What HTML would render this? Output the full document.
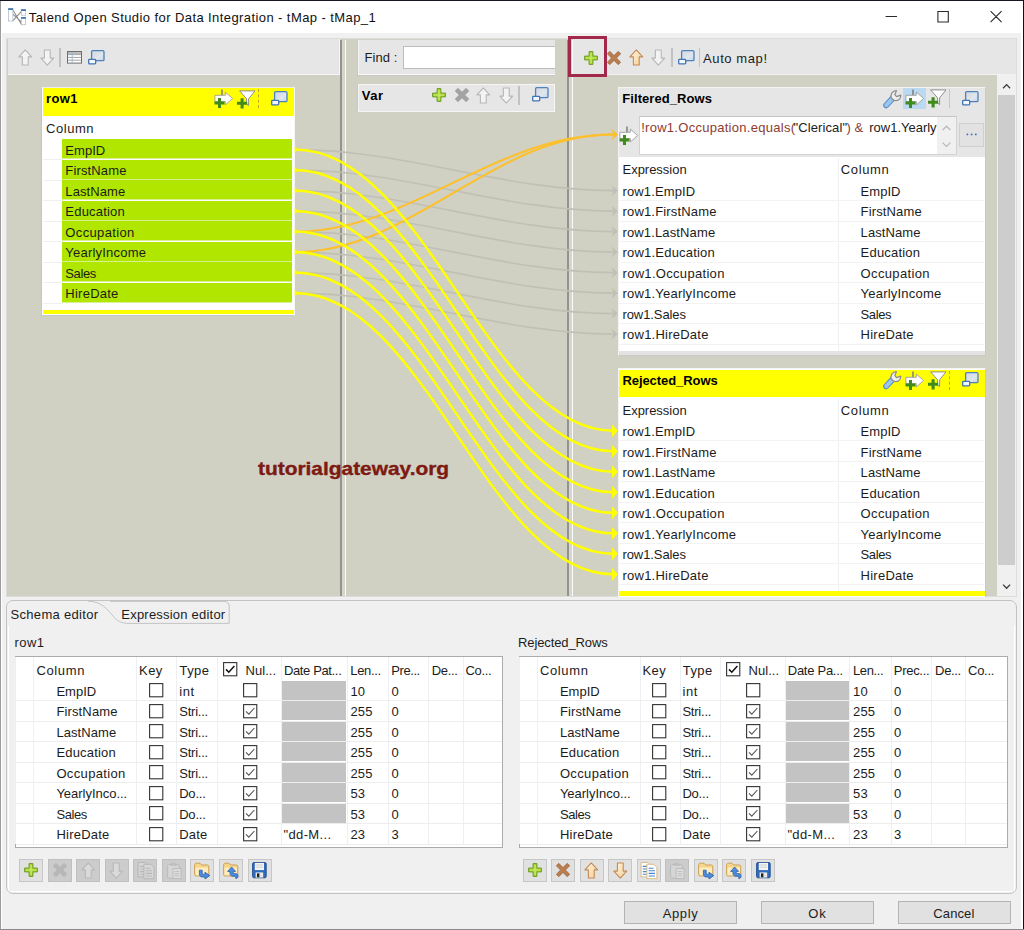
<!DOCTYPE html>
<html lang="en"><head><meta charset="utf-8"><title>Talend Open Studio for Data Integration - tMap - tMap_1</title><style>html,body{margin:0;padding:0}body{width:1024px;height:930px;overflow:hidden;background:#f0f0f0;position:relative;font-family:'Liberation Sans',sans-serif;font-size:13px}.a{position:absolute;display:block;overflow:visible}.t{position:absolute;white-space:pre;line-height:1;font-family:'Liberation Sans',sans-serif}</style></head><body><svg width="0" height="0" style="position:absolute"><defs><linearGradient id="gArr" x1="0" y1="0" x2="1" y2="1"><stop offset="0" stop-color="#fff6e2"/><stop offset="1" stop-color="#f6cf96"/></linearGradient><linearGradient id="gWin" x1="0" y1="0" x2="1" y2="1"><stop offset="0" stop-color="#d4d8de"/><stop offset=".6" stop-color="#dfe6ee"/><stop offset="1" stop-color="#c9d6e6"/></linearGradient></defs></svg>
<div class="a " style="left:1px;top:1px;width:1022px;height:32px;background:#fff;"></div>
<div class="a " style="left:1021px;top:33px;width:2px;height:896px;background:#fff;"></div>
<div class="a " style="left:1px;top:33px;width:1.4px;height:896px;background:#fff;"></div>
<svg class="a" style="left:7.8px;top:7.8px;" width="18.4" height="17.6" viewBox="0 0 18.4 17.6"><path d="M5 2.2L13.4 16.2M4.8 6.2L13.4 13.8M5 12.6L13.4 3.4" stroke="#8e8e8e" stroke-width="1.1"/><rect x="0.5" y="0.6" width="4.4" height="12.4" fill="#fff" stroke="#a8b6c8" stroke-width=".7"/><rect x="0.3" y="0.3" width="4.8" height="1.7" fill="#3c72ae"/><rect x="13.3" y="1.6" width="4.4" height="5.6" fill="#fff" stroke="#a8b6c8" stroke-width=".7"/><rect x="13.1" y="1.3" width="4.8" height="1.7" fill="#3c72ae"/><rect x="13.3" y="9.4" width="4.4" height="7.4" fill="#fff" stroke="#a8b6c8" stroke-width=".7"/><rect x="13.1" y="9.1" width="4.8" height="1.7" fill="#3c72ae"/></svg>
<span class="t" style="left:28.80px;top:11.30px;font-size:13px;letter-spacing:0.415px;color:#111;">Talend Open Studio for Data Integration - tMap - tMap_1</span>
<svg class="a" style="left:880px;top:6px;" width="130" height="22" viewBox="0 0 130 22"><path d="M5.6 10.5H17M57.9 5.5H68.3V16H57.9ZM110.6 5.2L121.6 16.2M121.6 5.2L110.6 16.2" fill="none" stroke="#2a2a2a" stroke-width="1.1"/></svg>
<div class="a " style="left:6px;top:38px;width:1011.4px;height:559.4px;background:#d1d1c3;border:1.6px solid #dcdcdc;box-sizing:border-box;"></div>
<div class="a " style="left:7.6px;top:39px;width:332.4px;height:35.8px;background:#e6e6e6;border-bottom:1.4px solid #f6f6f6;border-right:1px solid #f6f6f6;box-sizing:border-box;"></div>
<svg class="a" style="left:17.5px;top:48.6px;" width="14.6" height="17" viewBox="0 0 16 18.5"><path d="M8 1 L15 8.6 L11.2 8.6 L11.2 17.4 L4.8 17.4 L4.8 8.6 L1 8.6 Z" fill="#f3f3f3" stroke="#b6b6b6" stroke-width="1.2" stroke-linejoin="round"/></svg>
<svg class="a" style="left:39.8px;top:48.9px;" width="14.6" height="17" viewBox="0 0 16 18.5"><path d="M8 17.5 L15 9.9 L11.2 9.9 L11.2 1.1 L4.8 1.1 L4.8 9.9 L1 9.9 Z" fill="#f3f3f3" stroke="#b6b6b6" stroke-width="1.2" stroke-linejoin="round"/></svg>
<div class="a " style="left:59.2px;top:48px;width:1.5px;height:19px;background:#c2c2c2;"></div>
<svg class="a" style="left:67.2px;top:50.7px;" width="15" height="12.6" viewBox="0 0 15 12.6"><rect x=".5" y=".5" width="14" height="11.6" fill="#fff" stroke="#6e6e6e" stroke-width="1"/><rect x="1" y="1" width="13" height="2.2" fill="#bcbcbc"/><path d="M1 3.6H14M1 6.4H14M1 9.2H14" stroke="#9a9a9a" stroke-width=".9"/><path d="M5.2 1V12" stroke="#9ab4d6" stroke-width=".9"/></svg>
<svg class="a" style="left:88px;top:49.6px;" width="17" height="15" viewBox="0 0 17 15"><rect x="3.6" y=".7" width="12.4" height="10" rx="1.2" fill="url(#gWin)" stroke="#4f81bd" stroke-width="1.3"/><rect x=".7" y="9.3" width="7" height="4.6" rx=".8" fill="#f4f8fc" stroke="#3f74b5" stroke-width="1.3"/></svg>
<div class="a " style="left:340.2px;top:40px;width:1.5px;height:556px;background:#939393;"></div><div class="a " style="left:341.6px;top:40px;width:3.4px;height:556px;background:#d6d6ca;"></div><div class="a " style="left:345px;top:40px;width:1.2px;height:556px;background:#fbfbfb;"></div>
<div class="a " style="left:567.2px;top:40px;width:1.5px;height:556px;background:#939393;"></div><div class="a " style="left:568.6px;top:40px;width:3.4px;height:556px;background:#d6d6ca;"></div><div class="a " style="left:572px;top:40px;width:1.2px;height:556px;background:#fbfbfb;"></div>
<div class="a " style="left:357px;top:40.2px;width:1px;height:35.4px;background:#c8c8c2;"></div>
<div class="a " style="left:357.2px;top:75px;width:197.8px;height:0.8px;background:#c8c8c2;"></div>
<div class="a " style="left:357.8px;top:40.2px;width:197.2px;height:34.8px;background:#e6e6e6;border-left:1.2px solid #f8f8f8;border-bottom:1.4px solid #f8f8f8;box-sizing:border-box;"></div>
<span class="t" style="left:364.40px;top:51.10px;font-size:13px;letter-spacing:0.081px;color:#1c1c1c;">Find :</span>
<div class="a " style="left:403px;top:46.4px;width:151.6px;height:22.4px;background:#fff;border:1px solid #bcbcbc;border-right:none;box-sizing:border-box;"></div>
<div class="a " style="left:357px;top:83.6px;width:1px;height:29.2px;background:#c8c8c2;"></div>
<div class="a " style="left:357.8px;top:83.6px;width:197.2px;height:28.8px;background:#e6e6e6;border:1.2px solid #f6f6f6;box-sizing:border-box;"></div>
<span class="t" style="left:361.70px;top:89.20px;font-size:13px;letter-spacing:0.550px;color:#000;font-weight:700;">Var</span>
<svg class="a" style="left:432.4px;top:88.4px;" width="14" height="14" viewBox="0 0 14 14"><path d="M5.1 .6 H8.9 V5.1 H13.4 V8.9 H8.9 V13.4 H5.1 V8.9 H.6 V5.1 H5.1 Z" fill="#aad636" stroke="#6b9c22" stroke-width="1" stroke-linejoin="round"/><path d="M6.4 2 H7.6 V6.4 H12 V7.6 H7.6 V12 H6.4 V7.6 H2 V6.4 H6.4 Z" fill="#d6f07c" opacity=".8"/></svg>
<svg class="a" style="left:455.1px;top:88.2px;" width="14" height="14" viewBox="0 0 14 14"><g transform="rotate(45 7 7)"><path d="M5 -.7H9V5H14.7V9H9V14.7H5V9H-.7V5H5Z" fill="#a3a3a3" stroke="#a3a3a3" stroke-width=".7" stroke-linejoin="round"/></g></svg>
<svg class="a" style="left:476.1px;top:87px;" width="14.6" height="17" viewBox="0 0 16 18.5"><path d="M8 1 L15 8.6 L11.2 8.6 L11.2 17.4 L4.8 17.4 L4.8 8.6 L1 8.6 Z" fill="#f3f3f3" stroke="#b6b6b6" stroke-width="1.2" stroke-linejoin="round"/></svg>
<svg class="a" style="left:498.5px;top:87.2px;" width="14.6" height="17" viewBox="0 0 16 18.5"><path d="M8 17.5 L15 9.9 L11.2 9.9 L11.2 1.1 L4.8 1.1 L4.8 9.9 L1 9.9 Z" fill="#f3f3f3" stroke="#b6b6b6" stroke-width="1.2" stroke-linejoin="round"/></svg>
<div class="a " style="left:518.4px;top:85.6px;width:1.5px;height:19px;background:#c2c2c2;"></div>
<svg class="a" style="left:531.8px;top:87.2px;" width="17" height="15" viewBox="0 0 17 15"><rect x="3.6" y=".7" width="12.4" height="10" rx="1.2" fill="url(#gWin)" stroke="#4f81bd" stroke-width="1.3"/><rect x=".7" y="9.3" width="7" height="4.6" rx=".8" fill="#f4f8fc" stroke="#3f74b5" stroke-width="1.3"/></svg>
<div class="a " style="left:573.2px;top:39px;width:443px;height:36px;background:#e6e6e6;border-bottom:1px solid #f2f2f2;box-sizing:border-box;"></div>
<svg class="a" style="left:583.6px;top:50.6px;" width="14" height="14" viewBox="0 0 14 14"><path d="M5.1 .6 H8.9 V5.1 H13.4 V8.9 H8.9 V13.4 H5.1 V8.9 H.6 V5.1 H5.1 Z" fill="#aad636" stroke="#6b9c22" stroke-width="1" stroke-linejoin="round"/><path d="M6.4 2 H7.6 V6.4 H12 V7.6 H7.6 V12 H6.4 V7.6 H2 V6.4 H6.4 Z" fill="#d6f07c" opacity=".8"/></svg>
<svg class="a" style="left:607.4px;top:51px;" width="14" height="14" viewBox="0 0 14 14"><g transform="rotate(45 7 7)"><path d="M5.3 -.7H8.7V5.3H14.7V8.7H8.7V14.7H5.3V8.7H-.7V5.3H5.3Z" fill="#b97d4e" stroke="#99603a" stroke-width=".7" stroke-linejoin="round"/></g></svg>
<svg class="a" style="left:628.7px;top:48.8px;" width="14.6" height="17" viewBox="0 0 16 18.5"><path d="M8 1 L15 8.6 L11.2 8.6 L11.2 17.4 L4.8 17.4 L4.8 8.6 L1 8.6 Z" fill="url(#gArr)" stroke="#c48a54" stroke-width="1.2" stroke-linejoin="round"/></svg>
<svg class="a" style="left:651.3px;top:49px;" width="14.6" height="17" viewBox="0 0 16 18.5"><path d="M8 17.5 L15 9.9 L11.2 9.9 L11.2 1.1 L4.8 1.1 L4.8 9.9 L1 9.9 Z" fill="#f3f3f3" stroke="#b6b6b6" stroke-width="1.2" stroke-linejoin="round"/></svg>
<div class="a " style="left:671px;top:48px;width:1.5px;height:19px;background:#c2c2c2;"></div>
<svg class="a" style="left:678.1px;top:49.8px;" width="17" height="15" viewBox="0 0 17 15"><rect x="3.6" y=".7" width="12.4" height="10" rx="1.2" fill="url(#gWin)" stroke="#4f81bd" stroke-width="1.3"/><rect x=".7" y="9.3" width="7" height="4.6" rx=".8" fill="#f4f8fc" stroke="#3f74b5" stroke-width="1.3"/></svg>
<div class="a " style="left:698.6px;top:48px;width:1.5px;height:19px;background:#c2c2c2;"></div>
<span class="t" style="left:703.10px;top:52.10px;font-size:13px;letter-spacing:0.582px;color:#1c1c1c;">Auto map!</span>
<div class="a " style="left:568px;top:36px;width:39px;height:41px;border:3.2px solid #a3294b;box-sizing:border-box;"></div>
<div class="a " style="left:996.6px;top:75px;width:19.6px;height:521px;background:#f0f0f0;"></div>
<div class="a " style="left:998px;top:94.8px;width:17px;height:470.4px;background:#cdcdcd;"></div>
<svg class="a" style="left:1000px;top:80px;" width="14" height="10" viewBox="0 0 14 10"><path d="M3.1 8.2L6.6 4.6L10.1 8.2" fill="none" stroke="#3a3a3a" stroke-width="1.3"/></svg>
<svg class="a" style="left:1000px;top:580px;" width="14" height="10" viewBox="0 0 14 10"><path d="M3.1 4.6L6.6 8.2L10.1 4.6" fill="none" stroke="#3a3a3a" stroke-width="1.3"/></svg>
<div class="a " style="left:41.4px;top:86.8px;width:253.4px;height:228.8px;background:#fff;border:1px solid #c6c6c1;border-top-color:#efefea;border-right-color:#f6f6f2;border-bottom-color:#c2c8cf;box-sizing:border-box;"></div>
<div class="a " style="left:42.8px;top:87.8px;width:250.8px;height:28.2px;background:#ffff00;"></div>
<span class="t" style="left:46.00px;top:92.40px;font-size:13px;letter-spacing:0.364px;color:#000;font-weight:700;">row1</span>
<svg class="a" style="left:214px;top:89.4px;" width="19.4" height="19.4" viewBox="0 0 19.4 19.4"><path d="M8 .6V6.4" stroke="#7c7c7c" stroke-width="1.5"/><path d="M.9 6.3H11.3V3.1L18.6 9.5L11.3 16V12.6H.9Z" fill="#fff" stroke="#9c9c9c" stroke-width=".9" stroke-linejoin="round"/><path transform="translate(0.5 8.9)" d="M3.5 0H6.5V3.5H10V6.5H6.5V10H3.5V6.5H0V3.5H3.5Z" fill="#3f8c1c"/></svg>
<svg class="a" style="left:236.6px;top:89.6px;" width="18.8" height="18.6" viewBox="0 0 18.8 18.6"><path d="M2.6 .9H18L11.6 8.8V15.6L9.6 14V8.8Z" fill="#fff" stroke="#8e8e8e" stroke-width="1" stroke-linejoin="round"/><path transform="translate(0 8.2)" d="M3.57 0H6.63V3.57H10.2V6.63H6.63V10.2H3.57V6.63H0V3.57H3.57Z" fill="#3f8c1c"/></svg>
<div class="a " style="left:258px;top:89px;width:1px;height:19px;border-left:1px dashed #d0a020;"></div>
<svg class="a" style="left:271px;top:90.8px;" width="17" height="15" viewBox="0 0 17 15"><rect x="3.6" y=".7" width="12.4" height="10" rx="1.2" fill="url(#gWin)" stroke="#4f81bd" stroke-width="1.3"/><rect x=".7" y="9.3" width="7" height="4.6" rx=".8" fill="#f4f8fc" stroke="#3f74b5" stroke-width="1.3"/></svg>
<span class="t" style="left:46.00px;top:122.20px;font-size:13px;letter-spacing:0.551px;color:#1c1c1c;">Column</span>
<div class="a " style="left:42.6px;top:159.2px;width:20px;height:1px;background:#efefef;"></div>
<div class="a " style="left:62.1px;top:139px;width:230.4px;height:19.2px;background:#b1e600;"></div>
<div class="a " style="left:62.1px;top:158.2px;width:230.4px;height:1.3px;background:#d9f08f;"></div>
<span class="t" style="left:65.35px;top:143.80px;font-size:13px;letter-spacing:0.033px;color:#1c1c1c;">EmpID</span>
<div class="a " style="left:42.6px;top:179.7px;width:20px;height:1px;background:#efefef;"></div>
<div class="a " style="left:62.1px;top:159.5px;width:230.4px;height:19.2px;background:#b1e600;"></div>
<div class="a " style="left:62.1px;top:178.7px;width:230.4px;height:1.3px;background:#d9f08f;"></div>
<span class="t" style="left:65.35px;top:164.30px;font-size:13px;letter-spacing:0.139px;color:#1c1c1c;">FirstName</span>
<div class="a " style="left:42.6px;top:200.2px;width:20px;height:1px;background:#efefef;"></div>
<div class="a " style="left:62.1px;top:180px;width:230.4px;height:19.2px;background:#b1e600;"></div>
<div class="a " style="left:62.1px;top:199.2px;width:230.4px;height:1.3px;background:#d9f08f;"></div>
<span class="t" style="left:65.35px;top:184.80px;font-size:13px;letter-spacing:0.077px;color:#1c1c1c;">LastName</span>
<div class="a " style="left:42.6px;top:220.7px;width:20px;height:1px;background:#efefef;"></div>
<div class="a " style="left:62.1px;top:200.5px;width:230.4px;height:19.2px;background:#b1e600;"></div>
<div class="a " style="left:62.1px;top:219.7px;width:230.4px;height:1.3px;background:#d9f08f;"></div>
<span class="t" style="left:65.35px;top:205.30px;font-size:13px;letter-spacing:0.194px;color:#1c1c1c;">Education</span>
<div class="a " style="left:42.6px;top:241.2px;width:20px;height:1px;background:#efefef;"></div>
<div class="a " style="left:62.1px;top:221px;width:230.4px;height:19.2px;background:#b1e600;"></div>
<div class="a " style="left:62.1px;top:240.2px;width:230.4px;height:1.3px;background:#d9f08f;"></div>
<span class="t" style="left:65.35px;top:225.80px;font-size:13px;letter-spacing:0.351px;color:#1c1c1c;">Occupation</span>
<div class="a " style="left:42.6px;top:261.7px;width:20px;height:1px;background:#efefef;"></div>
<div class="a " style="left:62.1px;top:241.5px;width:230.4px;height:19.2px;background:#b1e600;"></div>
<div class="a " style="left:62.1px;top:260.7px;width:230.4px;height:1.3px;background:#d9f08f;"></div>
<span class="t" style="left:65.35px;top:246.30px;font-size:13px;letter-spacing:0.212px;color:#1c1c1c;">YearlyIncome</span>
<div class="a " style="left:42.6px;top:282.2px;width:20px;height:1px;background:#efefef;"></div>
<div class="a " style="left:62.1px;top:262px;width:230.4px;height:19.2px;background:#b1e600;"></div>
<div class="a " style="left:62.1px;top:281.2px;width:230.4px;height:1.3px;background:#d9f08f;"></div>
<span class="t" style="left:65.35px;top:266.80px;font-size:13px;letter-spacing:-0.417px;color:#1c1c1c;">Sales</span>
<div class="a " style="left:42.6px;top:302.7px;width:20px;height:1px;background:#efefef;"></div>
<div class="a " style="left:62.1px;top:282.5px;width:230.4px;height:19.2px;background:#b1e600;"></div>
<div class="a " style="left:62.1px;top:301.7px;width:230.4px;height:1.3px;background:#d9f08f;"></div>
<span class="t" style="left:65.35px;top:287.30px;font-size:13px;letter-spacing:0.238px;color:#1c1c1c;">HireDate</span>
<div class="a " style="left:42.8px;top:310px;width:250.8px;height:4.4px;background:#ffff00;"></div>
<div class="a " style="left:618px;top:86.8px;width:367.6px;height:269.4px;background:#fff;border:1px solid #f4f4f4;border-right-color:#c9c9c4;border-bottom-color:#c9c9c4;box-sizing:border-box;"></div>
<div class="a " style="left:619px;top:87.8px;width:365.6px;height:68.8px;background:#e6e6e6;"></div>
<span class="t" style="left:622.30px;top:92.40px;font-size:13px;letter-spacing:0.065px;color:#000;font-weight:700;">Filtered_Rows</span>
<svg class="a" style="left:883px;top:89.6px;" width="18.6" height="18" viewBox="0 0 18.6 18"><path d="M3.2 15.2 L9.6 8.4" stroke="#5a8fca" stroke-width="6" stroke-linecap="round"/><path d="M3.3 15.1 L9.5 8.5" stroke="#9bc6ee" stroke-width="4" stroke-linecap="round"/><path d="M8.6 8.2 C6.8 4.6 9.4 .6 13.4 .7 L11.8 4.6 L13.6 6.6 L17.8 5.2 C18 9.2 14.2 11.6 10.6 10.2 Z" fill="#f1f1f1" stroke="#8c8c8c" stroke-width="1.25" stroke-linejoin="round"/></svg>
<div class="a " style="left:903.4px;top:88px;width:22.6px;height:20.6px;background:#bcd9f2;"></div>
<svg class="a" style="left:905.2px;top:88.8px;" width="19.4" height="19.4" viewBox="0 0 19.4 19.4"><path d="M8 .6V6.4" stroke="#7c7c7c" stroke-width="1.5"/><path d="M.9 6.3H11.3V3.1L18.6 9.5L11.3 16V12.6H.9Z" fill="#fff" stroke="#9c9c9c" stroke-width=".9" stroke-linejoin="round"/><path transform="translate(0.5 8.9)" d="M3.5 0H6.5V3.5H10V6.5H6.5V10H3.5V6.5H0V3.5H3.5Z" fill="#3f8c1c"/></svg>
<svg class="a" style="left:927.6px;top:89px;" width="18.8" height="18.6" viewBox="0 0 18.8 18.6"><path d="M2.6 .9H18L11.6 8.8V15.6L9.6 14V8.8Z" fill="#fff" stroke="#8e8e8e" stroke-width="1" stroke-linejoin="round"/><path transform="translate(0 8.2)" d="M3.57 0H6.63V3.57H10.2V6.63H6.63V10.2H3.57V6.63H0V3.57H3.57Z" fill="#3f8c1c"/></svg>
<div class="a " style="left:949px;top:89px;width:1.4px;height:19px;background:#c6c6c6;"></div>
<svg class="a" style="left:962px;top:90.8px;" width="17" height="15" viewBox="0 0 17 15"><rect x="3.6" y=".7" width="12.4" height="10" rx="1.2" fill="url(#gWin)" stroke="#4f81bd" stroke-width="1.3"/><rect x=".7" y="9.3" width="7" height="4.6" rx=".8" fill="#f4f8fc" stroke="#3f74b5" stroke-width="1.3"/></svg>
<svg class="a" style="left:619.1px;top:125.9px;" width="19.4" height="19.4" viewBox="0 0 19.4 19.4"><path d="M8 .6V6.4" stroke="#7c7c7c" stroke-width="1.5"/><path d="M.9 6.3H11.3V3.1L18.6 9.5L11.3 16V12.6H.9Z" fill="#fff" stroke="#9c9c9c" stroke-width=".9" stroke-linejoin="round"/><path transform="translate(0.5 8.9)" d="M3.5 0H6.5V3.5H10V6.5H6.5V10H3.5V6.5H0V3.5H3.5Z" fill="#3f8c1c"/></svg>
<div class="a " style="left:639.2px;top:116.2px;width:317.4px;height:38.6px;background:#fff;border:1px solid #d2d2d2;border-top-color:#c4c4c4;box-sizing:border-box;"></div>
<div class="a " style="left:937.4px;top:117.2px;width:18.2px;height:36.6px;background:#f0f0f0;"></div>
<svg class="a" style="left:940px;top:122px;" width="13" height="30" viewBox="0 0 13 30"><path d="M2.6 8L6.5 4.2L10.4 8M2.6 20.6L6.5 24.4L10.4 20.6" fill="none" stroke="#b9b9b9" stroke-width="1.2"/></svg>
<span class="t" style="left:641.20px;top:121.30px;font-size:13px;letter-spacing:0.278px;color:#8c3b32;">!row1.Occupation.equals(</span>
<span class="t" style="left:793.50px;top:121.30px;font-size:13px;letter-spacing:0.112px;color:#222;">&quot;Clerical&quot;</span>
<span class="t" style="left:846.50px;top:121.30px;font-size:13px;letter-spacing:1.156px;color:#8c3b32;">)</span>
<span class="t" style="left:854.50px;top:121.30px;font-size:13px;letter-spacing:2.628px;color:#8c3b32;">&amp;</span>
<span class="t" style="left:869.30px;top:121.30px;font-size:13px;letter-spacing:-0.014px;color:#222;">row1.Yearly</span>
<div class="a " style="left:959.4px;top:123.4px;width:24.4px;height:23.4px;background:#e2e2e2;border:1px solid #cfcfcf;box-sizing:border-box;"></div>
<svg class="a" style="left:965px;top:131px;" width="14" height="6" viewBox="0 0 14 6"><circle cx="2.4" cy="3.4" r=".9" fill="#2f6fc4"/><circle cx="6.6" cy="3.4" r=".9" fill="#2f6fc4"/><circle cx="10.8" cy="3.4" r=".9" fill="#2f6fc4"/></svg>
<div class="a " style="left:838px;top:157.5px;width:1px;height:193px;background:#ecf0f4;"></div>
<span class="t" style="left:622.50px;top:163.30px;font-size:13px;letter-spacing:-0.021px;color:#1c1c1c;">Expression</span><span class="t" style="left:840.70px;top:163.30px;font-size:13px;letter-spacing:0.667px;color:#1c1c1c;">Column</span><span class="t" style="left:622.50px;top:184.70px;font-size:13px;letter-spacing:0.130px;color:#1c1c1c;">row1.EmpID</span><span class="t" style="left:860.60px;top:184.70px;font-size:13px;letter-spacing:0.033px;color:#1c1c1c;">EmpID</span><div class="a " style="left:619px;top:200.2px;width:365px;height:1px;background:#f3f3f3;"></div><span class="t" style="left:622.50px;top:205.20px;font-size:13px;letter-spacing:0.170px;color:#1c1c1c;">row1.FirstName</span><span class="t" style="left:860.60px;top:205.20px;font-size:13px;letter-spacing:0.139px;color:#1c1c1c;">FirstName</span><div class="a " style="left:619px;top:220.7px;width:365px;height:1px;background:#f3f3f3;"></div><span class="t" style="left:622.50px;top:225.70px;font-size:13px;letter-spacing:0.134px;color:#1c1c1c;">row1.LastName</span><span class="t" style="left:860.60px;top:225.70px;font-size:13px;letter-spacing:0.077px;color:#1c1c1c;">LastName</span><div class="a " style="left:619px;top:241.2px;width:365px;height:1px;background:#f3f3f3;"></div><span class="t" style="left:622.50px;top:246.20px;font-size:13px;letter-spacing:0.206px;color:#1c1c1c;">row1.Education</span><span class="t" style="left:860.60px;top:246.20px;font-size:13px;letter-spacing:0.194px;color:#1c1c1c;">Education</span><div class="a " style="left:619px;top:261.7px;width:365px;height:1px;background:#f3f3f3;"></div><span class="t" style="left:622.50px;top:266.70px;font-size:13px;letter-spacing:0.309px;color:#1c1c1c;">row1.Occupation</span><span class="t" style="left:860.60px;top:266.70px;font-size:13px;letter-spacing:0.351px;color:#1c1c1c;">Occupation</span><div class="a " style="left:619px;top:282.2px;width:365px;height:1px;background:#f3f3f3;"></div><span class="t" style="left:622.50px;top:287.20px;font-size:13px;letter-spacing:0.217px;color:#1c1c1c;">row1.YearlyIncome</span><span class="t" style="left:860.60px;top:287.20px;font-size:13px;letter-spacing:0.212px;color:#1c1c1c;">YearlyIncome</span><div class="a " style="left:619px;top:302.7px;width:365px;height:1px;background:#f3f3f3;"></div><span class="t" style="left:622.50px;top:307.70px;font-size:13px;letter-spacing:-0.093px;color:#1c1c1c;">row1.Sales</span><span class="t" style="left:860.60px;top:307.70px;font-size:13px;letter-spacing:-0.417px;color:#1c1c1c;">Sales</span><div class="a " style="left:619px;top:323.2px;width:365px;height:1px;background:#f3f3f3;"></div><span class="t" style="left:622.50px;top:328.20px;font-size:13px;letter-spacing:0.233px;color:#1c1c1c;">row1.HireDate</span><span class="t" style="left:860.60px;top:328.20px;font-size:13px;letter-spacing:0.238px;color:#1c1c1c;">HireDate</span><div class="a " style="left:619px;top:343.7px;width:365px;height:1px;background:#f3f3f3;"></div>
<div class="a " style="left:619px;top:351px;width:365.6px;height:4.4px;background:#e3e3e3;"></div>
<div class="a " style="left:618px;top:368.2px;width:367.6px;height:228.4px;background:#fff;border:1px solid #f4f4f4;border-right-color:#c9c9c4;border-bottom:none;box-sizing:border-box;"></div>
<div class="a " style="left:619px;top:369.6px;width:365.6px;height:27.8px;background:#ffff00;"></div>
<span class="t" style="left:622.40px;top:374.10px;font-size:13px;letter-spacing:-0.061px;color:#000;font-weight:700;">Rejected_Rows</span>
<svg class="a" style="left:883px;top:371px;" width="18.6" height="18" viewBox="0 0 18.6 18"><path d="M3.2 15.2 L9.6 8.4" stroke="#5a8fca" stroke-width="6" stroke-linecap="round"/><path d="M3.3 15.1 L9.5 8.5" stroke="#9bc6ee" stroke-width="4" stroke-linecap="round"/><path d="M8.6 8.2 C6.8 4.6 9.4 .6 13.4 .7 L11.8 4.6 L13.6 6.6 L17.8 5.2 C18 9.2 14.2 11.6 10.6 10.2 Z" fill="#f1f1f1" stroke="#8c8c8c" stroke-width="1.25" stroke-linejoin="round"/></svg>
<svg class="a" style="left:905.3px;top:370.6px;" width="19.4" height="19.4" viewBox="0 0 19.4 19.4"><path d="M8 .6V6.4" stroke="#7c7c7c" stroke-width="1.5"/><path d="M.9 6.3H11.3V3.1L18.6 9.5L11.3 16V12.6H.9Z" fill="#fff" stroke="#9c9c9c" stroke-width=".9" stroke-linejoin="round"/><path transform="translate(0.5 8.9)" d="M3.5 0H6.5V3.5H10V6.5H6.5V10H3.5V6.5H0V3.5H3.5Z" fill="#3f8c1c"/></svg>
<svg class="a" style="left:927.8px;top:370.8px;" width="18.8" height="18.6" viewBox="0 0 18.8 18.6"><path d="M2.6 .9H18L11.6 8.8V15.6L9.6 14V8.8Z" fill="#fff" stroke="#8e8e8e" stroke-width="1" stroke-linejoin="round"/><path transform="translate(0 8.2)" d="M3.57 0H6.63V3.57H10.2V6.63H6.63V10.2H3.57V6.63H0V3.57H3.57Z" fill="#3f8c1c"/></svg>
<div class="a " style="left:949.4px;top:370.6px;width:1px;height:19px;border-left:1px dashed #d0a020;"></div>
<svg class="a" style="left:962.4px;top:372.2px;" width="17" height="15" viewBox="0 0 17 15"><rect x="3.6" y=".7" width="12.4" height="10" rx="1.2" fill="url(#gWin)" stroke="#4f81bd" stroke-width="1.3"/><rect x=".7" y="9.3" width="7" height="4.6" rx=".8" fill="#f4f8fc" stroke="#3f74b5" stroke-width="1.3"/></svg>
<div class="a " style="left:838px;top:398.5px;width:1px;height:192px;background:#ecf0f4;"></div>
<span class="t" style="left:622.50px;top:403.50px;font-size:13px;letter-spacing:-0.021px;color:#1c1c1c;">Expression</span><span class="t" style="left:840.70px;top:403.50px;font-size:13px;letter-spacing:0.667px;color:#1c1c1c;">Column</span><span class="t" style="left:622.50px;top:425.30px;font-size:13px;letter-spacing:0.130px;color:#1c1c1c;">row1.EmpID</span><span class="t" style="left:860.60px;top:425.30px;font-size:13px;letter-spacing:0.033px;color:#1c1c1c;">EmpID</span><div class="a " style="left:619px;top:440.2px;width:365px;height:1px;background:#f3f3f3;"></div><span class="t" style="left:622.50px;top:445.80px;font-size:13px;letter-spacing:0.170px;color:#1c1c1c;">row1.FirstName</span><span class="t" style="left:860.60px;top:445.80px;font-size:13px;letter-spacing:0.139px;color:#1c1c1c;">FirstName</span><div class="a " style="left:619px;top:460.7px;width:365px;height:1px;background:#f3f3f3;"></div><span class="t" style="left:622.50px;top:466.30px;font-size:13px;letter-spacing:0.134px;color:#1c1c1c;">row1.LastName</span><span class="t" style="left:860.60px;top:466.30px;font-size:13px;letter-spacing:0.077px;color:#1c1c1c;">LastName</span><div class="a " style="left:619px;top:481.2px;width:365px;height:1px;background:#f3f3f3;"></div><span class="t" style="left:622.50px;top:486.80px;font-size:13px;letter-spacing:0.206px;color:#1c1c1c;">row1.Education</span><span class="t" style="left:860.60px;top:486.80px;font-size:13px;letter-spacing:0.194px;color:#1c1c1c;">Education</span><div class="a " style="left:619px;top:501.7px;width:365px;height:1px;background:#f3f3f3;"></div><span class="t" style="left:622.50px;top:507.30px;font-size:13px;letter-spacing:0.309px;color:#1c1c1c;">row1.Occupation</span><span class="t" style="left:860.60px;top:507.30px;font-size:13px;letter-spacing:0.351px;color:#1c1c1c;">Occupation</span><div class="a " style="left:619px;top:522.2px;width:365px;height:1px;background:#f3f3f3;"></div><span class="t" style="left:622.50px;top:527.80px;font-size:13px;letter-spacing:0.217px;color:#1c1c1c;">row1.YearlyIncome</span><span class="t" style="left:860.60px;top:527.80px;font-size:13px;letter-spacing:0.212px;color:#1c1c1c;">YearlyIncome</span><div class="a " style="left:619px;top:542.7px;width:365px;height:1px;background:#f3f3f3;"></div><span class="t" style="left:622.50px;top:548.30px;font-size:13px;letter-spacing:-0.093px;color:#1c1c1c;">row1.Sales</span><span class="t" style="left:860.60px;top:548.30px;font-size:13px;letter-spacing:-0.417px;color:#1c1c1c;">Sales</span><div class="a " style="left:619px;top:563.2px;width:365px;height:1px;background:#f3f3f3;"></div><span class="t" style="left:622.50px;top:568.80px;font-size:13px;letter-spacing:0.233px;color:#1c1c1c;">row1.HireDate</span><span class="t" style="left:860.60px;top:568.80px;font-size:13px;letter-spacing:0.238px;color:#1c1c1c;">HireDate</span><div class="a " style="left:619px;top:583.7px;width:365px;height:1px;background:#f3f3f3;"></div>
<div class="a " style="left:619px;top:591.2px;width:365.6px;height:5.2px;background:#ffff00;"></div>
<div class="a " style="left:6.4px;top:600.4px;width:1010.4px;height:293.2px;background:#f0f0f0;border:1px solid #c3c3c3;border-radius:7px;box-sizing:border-box;"></div>
<div class="a " style="left:7.6px;top:626px;width:1.6px;height:265px;background:#fff;"></div>
<div class="a " style="left:1013.8px;top:626px;width:1.6px;height:265px;background:#fff;"></div>
<div class="a " style="left:10px;top:891px;width:1003px;height:1.4px;background:#fff;"></div>
<svg class="a" style="left:80px;top:598px;" width="160" height="30" viewBox="0 0 160 30"><path d="M8 3.1C22 3.4 28 12 33 18C37 23 41 25.4 49 25.4H149.2V8C149.2 5 147 3.4 144 3.4H30" fill="none" stroke="#c3c3c3" stroke-width="1"/></svg>
<span class="t" style="left:10.50px;top:607.80px;font-size:13px;letter-spacing:0.313px;color:#1c1c1c;">Schema editor</span>
<span class="t" style="left:121.30px;top:607.80px;font-size:13px;letter-spacing:0.215px;color:#1c1c1c;">Expression editor</span>
<span class="t" style="left:14.60px;top:636.20px;font-size:13px;letter-spacing:0.378px;color:#1c1c1c;">row1</span><div class="a " style="left:15.4px;top:656.4px;width:488px;height:191.4px;background:#fff;border:1px solid #ababab;box-sizing:border-box;"></div><div class="a " style="left:15.4px;top:657.4px;width:1px;height:187px;background:#ecf0f5;"></div><div class="a " style="left:33.2px;top:657.4px;width:1px;height:187px;background:#ecf0f5;"></div><div class="a " style="left:136.2px;top:657.4px;width:1px;height:187px;background:#ecf0f5;"></div><div class="a " style="left:176.3px;top:657.4px;width:1px;height:187px;background:#ecf0f5;"></div><div class="a " style="left:217.3px;top:657.4px;width:1px;height:187px;background:#ecf0f5;"></div><div class="a " style="left:280.8px;top:657.4px;width:1px;height:187px;background:#ecf0f5;"></div><div class="a " style="left:346.6px;top:657.4px;width:1px;height:187px;background:#ecf0f5;"></div><div class="a " style="left:388.2px;top:657.4px;width:1px;height:187px;background:#ecf0f5;"></div><div class="a " style="left:428px;top:657.4px;width:1px;height:187px;background:#ecf0f5;"></div><div class="a " style="left:462.6px;top:657.4px;width:1px;height:187px;background:#ecf0f5;"></div><div class="a " style="left:16.4px;top:700px;width:486px;height:1px;background:#ededed;"></div><div class="a " style="left:16.4px;top:720.5px;width:486px;height:1px;background:#ededed;"></div><div class="a " style="left:16.4px;top:741px;width:486px;height:1px;background:#ededed;"></div><div class="a " style="left:16.4px;top:761.5px;width:486px;height:1px;background:#ededed;"></div><div class="a " style="left:16.4px;top:782px;width:486px;height:1px;background:#ededed;"></div><div class="a " style="left:16.4px;top:802.5px;width:486px;height:1px;background:#ededed;"></div><div class="a " style="left:16.4px;top:823px;width:486px;height:1px;background:#ededed;"></div><div class="a " style="left:16.4px;top:843.5px;width:486px;height:1px;background:#ededed;"></div><span class="t" style="left:36.50px;top:663.50px;font-size:13px;letter-spacing:0.617px;color:#1c1c1c;">Column</span><span class="t" style="left:139.10px;top:663.50px;font-size:13px;letter-spacing:0.365px;color:#1c1c1c;">Key</span><span class="t" style="left:179.60px;top:663.50px;font-size:13px;letter-spacing:0.403px;color:#1c1c1c;">Type</span><svg class="a" style="left:223.2px;top:662px;" width="14.4" height="14.4" viewBox="0 0 14.4 14.4"><rect x=".6" y=".6" width="13.2" height="13.2" fill="#fff" stroke="#333" stroke-width="1.1"/><path d="M3 7.4L5.8 10.2L11.4 4" fill="none" stroke="#111" stroke-width="1.5"/></svg><span class="t" style="left:245.60px;top:663.50px;font-size:13px;letter-spacing:0.026px;color:#1c1c1c;">Nul...</span><span class="t" style="left:283.90px;top:663.50px;font-size:13px;letter-spacing:-0.357px;color:#1c1c1c;">Date Pat...</span><span class="t" style="left:350.30px;top:663.50px;font-size:13px;letter-spacing:-0.339px;color:#1c1c1c;">Len...</span><span class="t" style="left:391.30px;top:663.50px;font-size:13px;letter-spacing:-0.430px;color:#1c1c1c;">Pre...</span><span class="t" style="left:431.70px;top:663.50px;font-size:13px;letter-spacing:-0.334px;color:#1c1c1c;">De...</span><span class="t" style="left:465.40px;top:663.50px;font-size:13px;letter-spacing:-0.294px;color:#1c1c1c;">Co...</span><span class="t" style="left:56.40px;top:684.80px;font-size:13px;letter-spacing:0.033px;color:#1c1c1c;">EmpID</span><svg class="a" style="left:148.8px;top:683.3px;" width="14.4" height="14.4" viewBox="0 0 14.4 14.4"><rect x=".6" y=".6" width="13.2" height="13.2" fill="#fff" stroke="#333" stroke-width="1.1"/></svg><span class="t" style="left:179.20px;top:684.80px;font-size:13px;letter-spacing:0.640px;color:#1c1c1c;">int</span><svg class="a" style="left:242.6px;top:683.4px;" width="14.4" height="14.4" viewBox="0 0 14.4 14.4"><rect x=".6" y=".6" width="13.2" height="13.2" fill="#fff" stroke="#333" stroke-width="1.1"/></svg><div class="a " style="left:282px;top:680.6px;width:64.2px;height:19.4px;background:#c3c3c3;"></div><span class="t" style="left:350.50px;top:684.80px;font-size:13px;letter-spacing:0.129px;color:#1c1c1c;">10</span><span class="t" style="left:391.60px;top:684.80px;font-size:13px;letter-spacing:0.129px;color:#1c1c1c;">0</span><span class="t" style="left:56.40px;top:705.30px;font-size:13px;letter-spacing:0.139px;color:#1c1c1c;">FirstName</span><svg class="a" style="left:148.8px;top:703.8px;" width="14.4" height="14.4" viewBox="0 0 14.4 14.4"><rect x=".6" y=".6" width="13.2" height="13.2" fill="#fff" stroke="#333" stroke-width="1.1"/></svg><span class="t" style="left:179.20px;top:705.30px;font-size:13px;letter-spacing:-0.218px;color:#1c1c1c;">Stri...</span><svg class="a" style="left:242.6px;top:703.9px;" width="14.4" height="14.4" viewBox="0 0 14.4 14.4"><rect x=".6" y=".6" width="13.2" height="13.2" fill="#fff" stroke="#333" stroke-width="1.1"/><path d="M3 7.4L5.8 10.2L11.4 4" fill="none" stroke="#555" stroke-width="1.1"/></svg><div class="a " style="left:282px;top:701.1px;width:64.2px;height:19.4px;background:#c3c3c3;"></div><span class="t" style="left:350.50px;top:705.30px;font-size:13px;letter-spacing:0.129px;color:#1c1c1c;">255</span><span class="t" style="left:391.60px;top:705.30px;font-size:13px;letter-spacing:0.129px;color:#1c1c1c;">0</span><span class="t" style="left:56.40px;top:725.80px;font-size:13px;letter-spacing:0.077px;color:#1c1c1c;">LastName</span><svg class="a" style="left:148.8px;top:724.3px;" width="14.4" height="14.4" viewBox="0 0 14.4 14.4"><rect x=".6" y=".6" width="13.2" height="13.2" fill="#fff" stroke="#333" stroke-width="1.1"/></svg><span class="t" style="left:179.20px;top:725.80px;font-size:13px;letter-spacing:-0.218px;color:#1c1c1c;">Stri...</span><svg class="a" style="left:242.6px;top:724.4px;" width="14.4" height="14.4" viewBox="0 0 14.4 14.4"><rect x=".6" y=".6" width="13.2" height="13.2" fill="#fff" stroke="#333" stroke-width="1.1"/><path d="M3 7.4L5.8 10.2L11.4 4" fill="none" stroke="#555" stroke-width="1.1"/></svg><div class="a " style="left:282px;top:721.6px;width:64.2px;height:19.4px;background:#c3c3c3;"></div><span class="t" style="left:350.50px;top:725.80px;font-size:13px;letter-spacing:0.129px;color:#1c1c1c;">255</span><span class="t" style="left:391.60px;top:725.80px;font-size:13px;letter-spacing:0.129px;color:#1c1c1c;">0</span><span class="t" style="left:56.40px;top:746.30px;font-size:13px;letter-spacing:0.194px;color:#1c1c1c;">Education</span><svg class="a" style="left:148.8px;top:744.8px;" width="14.4" height="14.4" viewBox="0 0 14.4 14.4"><rect x=".6" y=".6" width="13.2" height="13.2" fill="#fff" stroke="#333" stroke-width="1.1"/></svg><span class="t" style="left:179.20px;top:746.30px;font-size:13px;letter-spacing:-0.218px;color:#1c1c1c;">Stri...</span><svg class="a" style="left:242.6px;top:744.9px;" width="14.4" height="14.4" viewBox="0 0 14.4 14.4"><rect x=".6" y=".6" width="13.2" height="13.2" fill="#fff" stroke="#333" stroke-width="1.1"/><path d="M3 7.4L5.8 10.2L11.4 4" fill="none" stroke="#555" stroke-width="1.1"/></svg><div class="a " style="left:282px;top:742.1px;width:64.2px;height:19.4px;background:#c3c3c3;"></div><span class="t" style="left:350.50px;top:746.30px;font-size:13px;letter-spacing:0.129px;color:#1c1c1c;">255</span><span class="t" style="left:391.60px;top:746.30px;font-size:13px;letter-spacing:0.129px;color:#1c1c1c;">0</span><span class="t" style="left:56.40px;top:766.80px;font-size:13px;letter-spacing:0.351px;color:#1c1c1c;">Occupation</span><svg class="a" style="left:148.8px;top:765.3px;" width="14.4" height="14.4" viewBox="0 0 14.4 14.4"><rect x=".6" y=".6" width="13.2" height="13.2" fill="#fff" stroke="#333" stroke-width="1.1"/></svg><span class="t" style="left:179.20px;top:766.80px;font-size:13px;letter-spacing:-0.218px;color:#1c1c1c;">Stri...</span><svg class="a" style="left:242.6px;top:765.4px;" width="14.4" height="14.4" viewBox="0 0 14.4 14.4"><rect x=".6" y=".6" width="13.2" height="13.2" fill="#fff" stroke="#333" stroke-width="1.1"/><path d="M3 7.4L5.8 10.2L11.4 4" fill="none" stroke="#555" stroke-width="1.1"/></svg><div class="a " style="left:282px;top:762.6px;width:64.2px;height:19.4px;background:#c3c3c3;"></div><span class="t" style="left:350.50px;top:766.80px;font-size:13px;letter-spacing:0.129px;color:#1c1c1c;">255</span><span class="t" style="left:391.60px;top:766.80px;font-size:13px;letter-spacing:0.129px;color:#1c1c1c;">0</span><span class="t" style="left:56.40px;top:787.30px;font-size:13px;letter-spacing:-0.018px;color:#1c1c1c;">YearlyInco...</span><svg class="a" style="left:148.8px;top:785.8px;" width="14.4" height="14.4" viewBox="0 0 14.4 14.4"><rect x=".6" y=".6" width="13.2" height="13.2" fill="#fff" stroke="#333" stroke-width="1.1"/></svg><span class="t" style="left:179.20px;top:787.30px;font-size:13px;letter-spacing:-0.201px;color:#1c1c1c;">Do...</span><svg class="a" style="left:242.6px;top:785.9px;" width="14.4" height="14.4" viewBox="0 0 14.4 14.4"><rect x=".6" y=".6" width="13.2" height="13.2" fill="#fff" stroke="#333" stroke-width="1.1"/><path d="M3 7.4L5.8 10.2L11.4 4" fill="none" stroke="#555" stroke-width="1.1"/></svg><div class="a " style="left:282px;top:783.1px;width:64.2px;height:19.4px;background:#c3c3c3;"></div><span class="t" style="left:350.50px;top:787.30px;font-size:13px;letter-spacing:0.129px;color:#1c1c1c;">53</span><span class="t" style="left:391.60px;top:787.30px;font-size:13px;letter-spacing:0.129px;color:#1c1c1c;">0</span><span class="t" style="left:56.40px;top:807.80px;font-size:13px;letter-spacing:-0.417px;color:#1c1c1c;">Sales</span><svg class="a" style="left:148.8px;top:806.3px;" width="14.4" height="14.4" viewBox="0 0 14.4 14.4"><rect x=".6" y=".6" width="13.2" height="13.2" fill="#fff" stroke="#333" stroke-width="1.1"/></svg><span class="t" style="left:179.20px;top:807.80px;font-size:13px;letter-spacing:-0.201px;color:#1c1c1c;">Do...</span><svg class="a" style="left:242.6px;top:806.4px;" width="14.4" height="14.4" viewBox="0 0 14.4 14.4"><rect x=".6" y=".6" width="13.2" height="13.2" fill="#fff" stroke="#333" stroke-width="1.1"/><path d="M3 7.4L5.8 10.2L11.4 4" fill="none" stroke="#555" stroke-width="1.1"/></svg><div class="a " style="left:282px;top:803.6px;width:64.2px;height:19.4px;background:#c3c3c3;"></div><span class="t" style="left:350.50px;top:807.80px;font-size:13px;letter-spacing:0.129px;color:#1c1c1c;">53</span><span class="t" style="left:391.60px;top:807.80px;font-size:13px;letter-spacing:0.129px;color:#1c1c1c;">0</span><span class="t" style="left:56.40px;top:828.30px;font-size:13px;letter-spacing:0.238px;color:#1c1c1c;">HireDate</span><svg class="a" style="left:148.8px;top:826.8px;" width="14.4" height="14.4" viewBox="0 0 14.4 14.4"><rect x=".6" y=".6" width="13.2" height="13.2" fill="#fff" stroke="#333" stroke-width="1.1"/></svg><span class="t" style="left:179.20px;top:828.30px;font-size:13px;letter-spacing:0.208px;color:#1c1c1c;">Date</span><svg class="a" style="left:242.6px;top:826.9px;" width="14.4" height="14.4" viewBox="0 0 14.4 14.4"><rect x=".6" y=".6" width="13.2" height="13.2" fill="#fff" stroke="#333" stroke-width="1.1"/><path d="M3 7.4L5.8 10.2L11.4 4" fill="none" stroke="#555" stroke-width="1.1"/></svg><span class="t" style="left:283.50px;top:828.30px;font-size:13px;letter-spacing:0.354px;color:#1c1c1c;">&quot;dd-M...</span><span class="t" style="left:350.50px;top:828.30px;font-size:13px;letter-spacing:0.129px;color:#1c1c1c;">23</span><span class="t" style="left:391.60px;top:828.30px;font-size:13px;letter-spacing:0.129px;color:#1c1c1c;">3</span><div class="a " style="left:19.1px;top:859.2px;width:24px;height:22.4px;background:#e1e1e1;border:1px solid #c6c6c6;box-sizing:border-box;"></div><svg class="a" style="left:24.1px;top:862.7px;" width="14" height="14" viewBox="0 0 14 14"><path d="M5.1 .6 H8.9 V5.1 H13.4 V8.9 H8.9 V13.4 H5.1 V8.9 H.6 V5.1 H5.1 Z" fill="#aad636" stroke="#6b9c22" stroke-width="1" stroke-linejoin="round"/><path d="M6.4 2 H7.6 V6.4 H12 V7.6 H7.6 V12 H6.4 V7.6 H2 V6.4 H6.4 Z" fill="#d6f07c" opacity=".8"/></svg><div class="a " style="left:47.65px;top:859.2px;width:24px;height:22.4px;background:#cccccc;border:1px solid #c0c0c0;box-sizing:border-box;"></div><svg class="a" style="left:52.75px;top:862.8px;" width="14" height="14" viewBox="0 0 14 14"><g transform="rotate(45 7 7)"><path d="M5 -.7H9V5H14.7V9H9V14.7H5V9H-.7V5H5Z" fill="#b7b7b7" stroke="#b7b7b7" stroke-width=".7" stroke-linejoin="round"/></g></svg><div class="a " style="left:76.2px;top:859.2px;width:24px;height:22.4px;background:#cccccc;border:1px solid #c0c0c0;box-sizing:border-box;"></div><svg class="a" style="left:80.8px;top:861.7px;" width="14.6" height="17" viewBox="0 0 16 18.5"><path d="M8 1 L15 8.6 L11.2 8.6 L11.2 17.4 L4.8 17.4 L4.8 8.6 L1 8.6 Z" fill="#dadada" stroke="#b9b9b9" stroke-width="1.2" stroke-linejoin="round"/></svg><div class="a " style="left:104.75px;top:859.2px;width:24px;height:22.4px;background:#cccccc;border:1px solid #c0c0c0;box-sizing:border-box;"></div><svg class="a" style="left:109.35px;top:861.9px;" width="14.6" height="17" viewBox="0 0 16 18.5"><path d="M8 17.5 L15 9.9 L11.2 9.9 L11.2 1.1 L4.8 1.1 L4.8 9.9 L1 9.9 Z" fill="#dadada" stroke="#b9b9b9" stroke-width="1.2" stroke-linejoin="round"/></svg><div class="a " style="left:133.3px;top:859.2px;width:24px;height:22.4px;background:#cccccc;border:1px solid #c0c0c0;box-sizing:border-box;"></div><svg class="a" style="left:136.9px;top:862px;" width="18" height="17.4" viewBox="0 0 18 17.4"><path d="M1.1 0.5h7l3 3v11.4h-10z" fill="#d8d8d8" stroke="#b2b2b2" stroke-width=".9"/><path d="M2.8 4.4h5M2.8 7h6.4M2.8 9.6h6.4M2.8 12.2h6.4" stroke="#b6b6b6" stroke-width="1.1"/><path d="M6.9 2.3h7l3 3v11.4h-10z" fill="#d8d8d8" stroke="#b2b2b2" stroke-width=".9"/><path d="M8.6 6.2h5M8.6 8.8h6.4M8.6 11.4h6.4M8.6 14h6.4" stroke="#b6b6b6" stroke-width="1.1"/></svg><div class="a " style="left:161.85px;top:859.2px;width:24px;height:22.4px;background:#cccccc;border:1px solid #c0c0c0;box-sizing:border-box;"></div><svg class="a" style="left:166.85px;top:861.6px;" width="15" height="17.4" viewBox="0 0 15 17.4"><rect x=".6" y="2.6" width="11.6" height="13.6" rx="1" fill="#d6d6d6" stroke="#b9b9b9" stroke-width=".9"/><path d="M3.6 3.2C3.6 .6 9.2 .6 9.2 3.2Z" fill="#c4c4c4" stroke="#b9b9b9" stroke-width=".8"/><rect x="6" y="6.6" width="8" height="10" fill="#dedede" stroke="#b9b9b9" stroke-width=".9"/><path d="M7.6 9.4h4.6M7.6 11.6h4.6M7.6 13.8h4.6" stroke="#b9b9b9" stroke-width=".9"/></svg><div class="a " style="left:190.4px;top:859.2px;width:24px;height:22.4px;background:#e1e1e1;border:1px solid #c6c6c6;box-sizing:border-box;"></div><svg class="a" style="left:194px;top:861.6px;" width="16.6" height="17.6" viewBox="0 0 16.6 17.6"><path d="M.6 3.2C.6 2 1.4 1.2 2.4 1.2H6L7.6 3H13.4C14.2 3 14.8 3.6 14.8 4.4V12.6C14.8 13.4 14.2 14 13.4 14H2C1.2 14 .6 13.4 .6 12.6Z" fill="#f6d488" stroke="#c99a4c" stroke-width=".9"/><path d="M1.4 5.4H14V12.4C14 13 13.6 13.3 13 13.3H2.4C1.8 13.3 1.4 13 1.4 12.4Z" fill="#fdecc0"/><path d="M5.4 8.2V12.2C5.4 14.2 7 15 8.6 15H11V17L15.8 13.6L11 10.2V12.2H9C8.4 12.2 8.2 11.8 8.2 11.2V8.2Z" fill="#4b8be0" stroke="#2a5ea8" stroke-width=".8" stroke-linejoin="round"/></svg><div class="a " style="left:218.95px;top:859.2px;width:24px;height:22.4px;background:#e1e1e1;border:1px solid #c6c6c6;box-sizing:border-box;"></div><svg class="a" style="left:222.55px;top:861.6px;" width="16.6" height="17.6" viewBox="0 0 16.6 17.6"><path d="M.6 3.2C.6 2 1.4 1.2 2.4 1.2H6L7.6 3H13.4C14.2 3 14.8 3.6 14.8 4.4V12.6C14.8 13.4 14.2 14 13.4 14H2C1.2 14 .6 13.4 .6 12.6Z" fill="#f6d488" stroke="#c99a4c" stroke-width=".9"/><path d="M1.4 5.4H14V12.4C14 13 13.6 13.3 13 13.3H2.4C1.8 13.3 1.4 13 1.4 12.4Z" fill="#fdecc0"/><path d="M8.6 5L4.6 9.4H7V11.6C7 13 8 14 9.4 14.2H12.8V16.6C15 16.2 15.8 14.4 14.6 12.4C13.8 11.6 12.4 11.4 10.2 11.4V9.4H12.6Z" fill="#4b8be0" stroke="#2a5ea8" stroke-width=".8" stroke-linejoin="round"/></svg><div class="a " style="left:247.5px;top:859.2px;width:24px;height:22.4px;background:#e1e1e1;border:1px solid #c6c6c6;box-sizing:border-box;"></div><svg class="a" style="left:252.3px;top:862.2px;" width="15" height="16.4" viewBox="0 0 15 16.4"><path d="M.6 1.8C.6 1.1 1.1 .6 1.8 .6H13C13.7 .6 14.2 1.1 14.2 1.8V14.6C14.2 15.3 13.7 15.8 13 15.8H1.8C1.1 15.8 .6 15.3 .6 14.6Z" fill="#2f6bbd" stroke="#1d4a8c" stroke-width=".9"/><rect x="2.8" y=".9" width="9.2" height="7.2" fill="#f4f4f4"/><path d="M3.8 3h7.2M3.8 5.2h7.2" stroke="#c8c8c8" stroke-width=".9"/><rect x="3.6" y="10.4" width="7.6" height="5.2" fill="#e6e6e6"/><rect x="5" y="11.4" width="2.4" height="3.8" fill="#222"/></svg>
<span class="t" style="left:518.10px;top:636.20px;font-size:13px;letter-spacing:-0.119px;color:#1c1c1c;">Rejected_Rows</span><div class="a " style="left:518.9px;top:656.4px;width:489.5px;height:191.4px;background:#fff;border:1px solid #ababab;box-sizing:border-box;"></div><div class="a " style="left:519px;top:657.4px;width:1px;height:187px;background:#ecf0f5;"></div><div class="a " style="left:536.7px;top:657.4px;width:1px;height:187px;background:#ecf0f5;"></div><div class="a " style="left:639.6px;top:657.4px;width:1px;height:187px;background:#ecf0f5;"></div><div class="a " style="left:679.5px;top:657.4px;width:1px;height:187px;background:#ecf0f5;"></div><div class="a " style="left:720.3px;top:657.4px;width:1px;height:187px;background:#ecf0f5;"></div><div class="a " style="left:784.7px;top:657.4px;width:1px;height:187px;background:#ecf0f5;"></div><div class="a " style="left:849.2px;top:657.4px;width:1px;height:187px;background:#ecf0f5;"></div><div class="a " style="left:890.7px;top:657.4px;width:1px;height:187px;background:#ecf0f5;"></div><div class="a " style="left:931.4px;top:657.4px;width:1px;height:187px;background:#ecf0f5;"></div><div class="a " style="left:965.3px;top:657.4px;width:1px;height:187px;background:#ecf0f5;"></div><div class="a " style="left:519.9px;top:700px;width:487.5px;height:1px;background:#ededed;"></div><div class="a " style="left:519.9px;top:720.5px;width:487.5px;height:1px;background:#ededed;"></div><div class="a " style="left:519.9px;top:741px;width:487.5px;height:1px;background:#ededed;"></div><div class="a " style="left:519.9px;top:761.5px;width:487.5px;height:1px;background:#ededed;"></div><div class="a " style="left:519.9px;top:782px;width:487.5px;height:1px;background:#ededed;"></div><div class="a " style="left:519.9px;top:802.5px;width:487.5px;height:1px;background:#ededed;"></div><div class="a " style="left:519.9px;top:823px;width:487.5px;height:1px;background:#ededed;"></div><div class="a " style="left:519.9px;top:843.5px;width:487.5px;height:1px;background:#ededed;"></div><span class="t" style="left:540.00px;top:663.50px;font-size:13px;letter-spacing:0.617px;color:#1c1c1c;">Column</span><span class="t" style="left:642.50px;top:663.50px;font-size:13px;letter-spacing:0.365px;color:#1c1c1c;">Key</span><span class="t" style="left:682.80px;top:663.50px;font-size:13px;letter-spacing:0.403px;color:#1c1c1c;">Type</span><svg class="a" style="left:726.2px;top:662px;" width="14.4" height="14.4" viewBox="0 0 14.4 14.4"><rect x=".6" y=".6" width="13.2" height="13.2" fill="#fff" stroke="#333" stroke-width="1.1"/><path d="M3 7.4L5.8 10.2L11.4 4" fill="none" stroke="#111" stroke-width="1.5"/></svg><span class="t" style="left:748.60px;top:663.50px;font-size:13px;letter-spacing:0.026px;color:#1c1c1c;">Nul...</span><span class="t" style="left:787.80px;top:663.50px;font-size:13px;letter-spacing:-0.271px;color:#1c1c1c;">Date Pa...</span><span class="t" style="left:852.90px;top:663.50px;font-size:13px;letter-spacing:-0.339px;color:#1c1c1c;">Len...</span><span class="t" style="left:893.80px;top:663.50px;font-size:13px;letter-spacing:-0.297px;color:#1c1c1c;">Prec...</span><span class="t" style="left:935.10px;top:663.50px;font-size:13px;letter-spacing:-0.334px;color:#1c1c1c;">De...</span><span class="t" style="left:968.10px;top:663.50px;font-size:13px;letter-spacing:-0.294px;color:#1c1c1c;">Co...</span><span class="t" style="left:559.90px;top:684.80px;font-size:13px;letter-spacing:0.033px;color:#1c1c1c;">EmpID</span><svg class="a" style="left:652.2px;top:683.3px;" width="14.4" height="14.4" viewBox="0 0 14.4 14.4"><rect x=".6" y=".6" width="13.2" height="13.2" fill="#fff" stroke="#333" stroke-width="1.1"/></svg><span class="t" style="left:682.40px;top:684.80px;font-size:13px;letter-spacing:0.640px;color:#1c1c1c;">int</span><svg class="a" style="left:745.6px;top:683.4px;" width="14.4" height="14.4" viewBox="0 0 14.4 14.4"><rect x=".6" y=".6" width="13.2" height="13.2" fill="#fff" stroke="#333" stroke-width="1.1"/></svg><div class="a " style="left:785.9px;top:680.6px;width:62.9px;height:19.4px;background:#c3c3c3;"></div><span class="t" style="left:853.10px;top:684.80px;font-size:13px;letter-spacing:0.129px;color:#1c1c1c;">10</span><span class="t" style="left:894.10px;top:684.80px;font-size:13px;letter-spacing:0.129px;color:#1c1c1c;">0</span><span class="t" style="left:559.90px;top:705.30px;font-size:13px;letter-spacing:0.139px;color:#1c1c1c;">FirstName</span><svg class="a" style="left:652.2px;top:703.8px;" width="14.4" height="14.4" viewBox="0 0 14.4 14.4"><rect x=".6" y=".6" width="13.2" height="13.2" fill="#fff" stroke="#333" stroke-width="1.1"/></svg><span class="t" style="left:682.40px;top:705.30px;font-size:13px;letter-spacing:-0.218px;color:#1c1c1c;">Stri...</span><svg class="a" style="left:745.6px;top:703.9px;" width="14.4" height="14.4" viewBox="0 0 14.4 14.4"><rect x=".6" y=".6" width="13.2" height="13.2" fill="#fff" stroke="#333" stroke-width="1.1"/><path d="M3 7.4L5.8 10.2L11.4 4" fill="none" stroke="#555" stroke-width="1.1"/></svg><div class="a " style="left:785.9px;top:701.1px;width:62.9px;height:19.4px;background:#c3c3c3;"></div><span class="t" style="left:853.10px;top:705.30px;font-size:13px;letter-spacing:0.129px;color:#1c1c1c;">255</span><span class="t" style="left:894.10px;top:705.30px;font-size:13px;letter-spacing:0.129px;color:#1c1c1c;">0</span><span class="t" style="left:559.90px;top:725.80px;font-size:13px;letter-spacing:0.077px;color:#1c1c1c;">LastName</span><svg class="a" style="left:652.2px;top:724.3px;" width="14.4" height="14.4" viewBox="0 0 14.4 14.4"><rect x=".6" y=".6" width="13.2" height="13.2" fill="#fff" stroke="#333" stroke-width="1.1"/></svg><span class="t" style="left:682.40px;top:725.80px;font-size:13px;letter-spacing:-0.218px;color:#1c1c1c;">Stri...</span><svg class="a" style="left:745.6px;top:724.4px;" width="14.4" height="14.4" viewBox="0 0 14.4 14.4"><rect x=".6" y=".6" width="13.2" height="13.2" fill="#fff" stroke="#333" stroke-width="1.1"/><path d="M3 7.4L5.8 10.2L11.4 4" fill="none" stroke="#555" stroke-width="1.1"/></svg><div class="a " style="left:785.9px;top:721.6px;width:62.9px;height:19.4px;background:#c3c3c3;"></div><span class="t" style="left:853.10px;top:725.80px;font-size:13px;letter-spacing:0.129px;color:#1c1c1c;">255</span><span class="t" style="left:894.10px;top:725.80px;font-size:13px;letter-spacing:0.129px;color:#1c1c1c;">0</span><span class="t" style="left:559.90px;top:746.30px;font-size:13px;letter-spacing:0.194px;color:#1c1c1c;">Education</span><svg class="a" style="left:652.2px;top:744.8px;" width="14.4" height="14.4" viewBox="0 0 14.4 14.4"><rect x=".6" y=".6" width="13.2" height="13.2" fill="#fff" stroke="#333" stroke-width="1.1"/></svg><span class="t" style="left:682.40px;top:746.30px;font-size:13px;letter-spacing:-0.218px;color:#1c1c1c;">Stri...</span><svg class="a" style="left:745.6px;top:744.9px;" width="14.4" height="14.4" viewBox="0 0 14.4 14.4"><rect x=".6" y=".6" width="13.2" height="13.2" fill="#fff" stroke="#333" stroke-width="1.1"/><path d="M3 7.4L5.8 10.2L11.4 4" fill="none" stroke="#555" stroke-width="1.1"/></svg><div class="a " style="left:785.9px;top:742.1px;width:62.9px;height:19.4px;background:#c3c3c3;"></div><span class="t" style="left:853.10px;top:746.30px;font-size:13px;letter-spacing:0.129px;color:#1c1c1c;">255</span><span class="t" style="left:894.10px;top:746.30px;font-size:13px;letter-spacing:0.129px;color:#1c1c1c;">0</span><span class="t" style="left:559.90px;top:766.80px;font-size:13px;letter-spacing:0.351px;color:#1c1c1c;">Occupation</span><svg class="a" style="left:652.2px;top:765.3px;" width="14.4" height="14.4" viewBox="0 0 14.4 14.4"><rect x=".6" y=".6" width="13.2" height="13.2" fill="#fff" stroke="#333" stroke-width="1.1"/></svg><span class="t" style="left:682.40px;top:766.80px;font-size:13px;letter-spacing:-0.218px;color:#1c1c1c;">Stri...</span><svg class="a" style="left:745.6px;top:765.4px;" width="14.4" height="14.4" viewBox="0 0 14.4 14.4"><rect x=".6" y=".6" width="13.2" height="13.2" fill="#fff" stroke="#333" stroke-width="1.1"/><path d="M3 7.4L5.8 10.2L11.4 4" fill="none" stroke="#555" stroke-width="1.1"/></svg><div class="a " style="left:785.9px;top:762.6px;width:62.9px;height:19.4px;background:#c3c3c3;"></div><span class="t" style="left:853.10px;top:766.80px;font-size:13px;letter-spacing:0.129px;color:#1c1c1c;">255</span><span class="t" style="left:894.10px;top:766.80px;font-size:13px;letter-spacing:0.129px;color:#1c1c1c;">0</span><span class="t" style="left:559.90px;top:787.30px;font-size:13px;letter-spacing:-0.018px;color:#1c1c1c;">YearlyInco...</span><svg class="a" style="left:652.2px;top:785.8px;" width="14.4" height="14.4" viewBox="0 0 14.4 14.4"><rect x=".6" y=".6" width="13.2" height="13.2" fill="#fff" stroke="#333" stroke-width="1.1"/></svg><span class="t" style="left:682.40px;top:787.30px;font-size:13px;letter-spacing:-0.201px;color:#1c1c1c;">Do...</span><svg class="a" style="left:745.6px;top:785.9px;" width="14.4" height="14.4" viewBox="0 0 14.4 14.4"><rect x=".6" y=".6" width="13.2" height="13.2" fill="#fff" stroke="#333" stroke-width="1.1"/><path d="M3 7.4L5.8 10.2L11.4 4" fill="none" stroke="#555" stroke-width="1.1"/></svg><div class="a " style="left:785.9px;top:783.1px;width:62.9px;height:19.4px;background:#c3c3c3;"></div><span class="t" style="left:853.10px;top:787.30px;font-size:13px;letter-spacing:0.129px;color:#1c1c1c;">53</span><span class="t" style="left:894.10px;top:787.30px;font-size:13px;letter-spacing:0.129px;color:#1c1c1c;">0</span><span class="t" style="left:559.90px;top:807.80px;font-size:13px;letter-spacing:-0.417px;color:#1c1c1c;">Sales</span><svg class="a" style="left:652.2px;top:806.3px;" width="14.4" height="14.4" viewBox="0 0 14.4 14.4"><rect x=".6" y=".6" width="13.2" height="13.2" fill="#fff" stroke="#333" stroke-width="1.1"/></svg><span class="t" style="left:682.40px;top:807.80px;font-size:13px;letter-spacing:-0.201px;color:#1c1c1c;">Do...</span><svg class="a" style="left:745.6px;top:806.4px;" width="14.4" height="14.4" viewBox="0 0 14.4 14.4"><rect x=".6" y=".6" width="13.2" height="13.2" fill="#fff" stroke="#333" stroke-width="1.1"/><path d="M3 7.4L5.8 10.2L11.4 4" fill="none" stroke="#555" stroke-width="1.1"/></svg><div class="a " style="left:785.9px;top:803.6px;width:62.9px;height:19.4px;background:#c3c3c3;"></div><span class="t" style="left:853.10px;top:807.80px;font-size:13px;letter-spacing:0.129px;color:#1c1c1c;">53</span><span class="t" style="left:894.10px;top:807.80px;font-size:13px;letter-spacing:0.129px;color:#1c1c1c;">0</span><span class="t" style="left:559.90px;top:828.30px;font-size:13px;letter-spacing:0.238px;color:#1c1c1c;">HireDate</span><svg class="a" style="left:652.2px;top:826.8px;" width="14.4" height="14.4" viewBox="0 0 14.4 14.4"><rect x=".6" y=".6" width="13.2" height="13.2" fill="#fff" stroke="#333" stroke-width="1.1"/></svg><span class="t" style="left:682.40px;top:828.30px;font-size:13px;letter-spacing:0.208px;color:#1c1c1c;">Date</span><svg class="a" style="left:745.6px;top:826.9px;" width="14.4" height="14.4" viewBox="0 0 14.4 14.4"><rect x=".6" y=".6" width="13.2" height="13.2" fill="#fff" stroke="#333" stroke-width="1.1"/><path d="M3 7.4L5.8 10.2L11.4 4" fill="none" stroke="#555" stroke-width="1.1"/></svg><span class="t" style="left:787.40px;top:828.30px;font-size:13px;letter-spacing:0.354px;color:#1c1c1c;">&quot;dd-M...</span><span class="t" style="left:853.10px;top:828.30px;font-size:13px;letter-spacing:0.129px;color:#1c1c1c;">23</span><span class="t" style="left:894.10px;top:828.30px;font-size:13px;letter-spacing:0.129px;color:#1c1c1c;">3</span><div class="a " style="left:522.6px;top:859.2px;width:24px;height:22.4px;background:#e1e1e1;border:1px solid #c6c6c6;box-sizing:border-box;"></div><svg class="a" style="left:527.6px;top:862.7px;" width="14" height="14" viewBox="0 0 14 14"><path d="M5.1 .6 H8.9 V5.1 H13.4 V8.9 H8.9 V13.4 H5.1 V8.9 H.6 V5.1 H5.1 Z" fill="#aad636" stroke="#6b9c22" stroke-width="1" stroke-linejoin="round"/><path d="M6.4 2 H7.6 V6.4 H12 V7.6 H7.6 V12 H6.4 V7.6 H2 V6.4 H6.4 Z" fill="#d6f07c" opacity=".8"/></svg><div class="a " style="left:551.15px;top:859.2px;width:24px;height:22.4px;background:#e1e1e1;border:1px solid #c6c6c6;box-sizing:border-box;"></div><svg class="a" style="left:556.25px;top:862.8px;" width="14" height="14" viewBox="0 0 14 14"><g transform="rotate(45 7 7)"><path d="M5.3 -.7H8.7V5.3H14.7V8.7H8.7V14.7H5.3V8.7H-.7V5.3H5.3Z" fill="#b97d4e" stroke="#99603a" stroke-width=".7" stroke-linejoin="round"/></g></svg><div class="a " style="left:579.7px;top:859.2px;width:24px;height:22.4px;background:#e1e1e1;border:1px solid #c6c6c6;box-sizing:border-box;"></div><svg class="a" style="left:584.3px;top:861.7px;" width="14.6" height="17" viewBox="0 0 16 18.5"><path d="M8 1 L15 8.6 L11.2 8.6 L11.2 17.4 L4.8 17.4 L4.8 8.6 L1 8.6 Z" fill="url(#gArr)" stroke="#c48a54" stroke-width="1.2" stroke-linejoin="round"/></svg><div class="a " style="left:608.25px;top:859.2px;width:24px;height:22.4px;background:#e1e1e1;border:1px solid #c6c6c6;box-sizing:border-box;"></div><svg class="a" style="left:612.85px;top:861.9px;" width="14.6" height="17" viewBox="0 0 16 18.5"><path d="M8 17.5 L15 9.9 L11.2 9.9 L11.2 1.1 L4.8 1.1 L4.8 9.9 L1 9.9 Z" fill="url(#gArr)" stroke="#c48a54" stroke-width="1.2" stroke-linejoin="round"/></svg><div class="a " style="left:636.8px;top:859.2px;width:24px;height:22.4px;background:#e1e1e1;border:1px solid #c6c6c6;box-sizing:border-box;"></div><svg class="a" style="left:640.4px;top:862px;" width="18" height="17.4" viewBox="0 0 18 17.4"><path d="M1.1 0.5h7l3 3v11.4h-10z" fill="#fff" stroke="#d9b777" stroke-width=".9"/><path d="M2.8 4.4h5M2.8 7h6.4M2.8 9.6h6.4M2.8 12.2h6.4" stroke="#4a86c8" stroke-width="1.1"/><path d="M6.9 2.3h7l3 3v11.4h-10z" fill="#fff" stroke="#d9b777" stroke-width=".9"/><path d="M8.6 6.2h5M8.6 8.8h6.4M8.6 11.4h6.4M8.6 14h6.4" stroke="#4a86c8" stroke-width="1.1"/></svg><div class="a " style="left:665.35px;top:859.2px;width:24px;height:22.4px;background:#cccccc;border:1px solid #c0c0c0;box-sizing:border-box;"></div><svg class="a" style="left:670.35px;top:861.6px;" width="15" height="17.4" viewBox="0 0 15 17.4"><rect x=".6" y="2.6" width="11.6" height="13.6" rx="1" fill="#d6d6d6" stroke="#b9b9b9" stroke-width=".9"/><path d="M3.6 3.2C3.6 .6 9.2 .6 9.2 3.2Z" fill="#c4c4c4" stroke="#b9b9b9" stroke-width=".8"/><rect x="6" y="6.6" width="8" height="10" fill="#dedede" stroke="#b9b9b9" stroke-width=".9"/><path d="M7.6 9.4h4.6M7.6 11.6h4.6M7.6 13.8h4.6" stroke="#b9b9b9" stroke-width=".9"/></svg><div class="a " style="left:693.9px;top:859.2px;width:24px;height:22.4px;background:#e1e1e1;border:1px solid #c6c6c6;box-sizing:border-box;"></div><svg class="a" style="left:697.5px;top:861.6px;" width="16.6" height="17.6" viewBox="0 0 16.6 17.6"><path d="M.6 3.2C.6 2 1.4 1.2 2.4 1.2H6L7.6 3H13.4C14.2 3 14.8 3.6 14.8 4.4V12.6C14.8 13.4 14.2 14 13.4 14H2C1.2 14 .6 13.4 .6 12.6Z" fill="#f6d488" stroke="#c99a4c" stroke-width=".9"/><path d="M1.4 5.4H14V12.4C14 13 13.6 13.3 13 13.3H2.4C1.8 13.3 1.4 13 1.4 12.4Z" fill="#fdecc0"/><path d="M5.4 8.2V12.2C5.4 14.2 7 15 8.6 15H11V17L15.8 13.6L11 10.2V12.2H9C8.4 12.2 8.2 11.8 8.2 11.2V8.2Z" fill="#4b8be0" stroke="#2a5ea8" stroke-width=".8" stroke-linejoin="round"/></svg><div class="a " style="left:722.45px;top:859.2px;width:24px;height:22.4px;background:#e1e1e1;border:1px solid #c6c6c6;box-sizing:border-box;"></div><svg class="a" style="left:726.05px;top:861.6px;" width="16.6" height="17.6" viewBox="0 0 16.6 17.6"><path d="M.6 3.2C.6 2 1.4 1.2 2.4 1.2H6L7.6 3H13.4C14.2 3 14.8 3.6 14.8 4.4V12.6C14.8 13.4 14.2 14 13.4 14H2C1.2 14 .6 13.4 .6 12.6Z" fill="#f6d488" stroke="#c99a4c" stroke-width=".9"/><path d="M1.4 5.4H14V12.4C14 13 13.6 13.3 13 13.3H2.4C1.8 13.3 1.4 13 1.4 12.4Z" fill="#fdecc0"/><path d="M8.6 5L4.6 9.4H7V11.6C7 13 8 14 9.4 14.2H12.8V16.6C15 16.2 15.8 14.4 14.6 12.4C13.8 11.6 12.4 11.4 10.2 11.4V9.4H12.6Z" fill="#4b8be0" stroke="#2a5ea8" stroke-width=".8" stroke-linejoin="round"/></svg><div class="a " style="left:751px;top:859.2px;width:24px;height:22.4px;background:#e1e1e1;border:1px solid #c6c6c6;box-sizing:border-box;"></div><svg class="a" style="left:755.8px;top:862.2px;" width="15" height="16.4" viewBox="0 0 15 16.4"><path d="M.6 1.8C.6 1.1 1.1 .6 1.8 .6H13C13.7 .6 14.2 1.1 14.2 1.8V14.6C14.2 15.3 13.7 15.8 13 15.8H1.8C1.1 15.8 .6 15.3 .6 14.6Z" fill="#2f6bbd" stroke="#1d4a8c" stroke-width=".9"/><rect x="2.8" y=".9" width="9.2" height="7.2" fill="#f4f4f4"/><path d="M3.8 3h7.2M3.8 5.2h7.2" stroke="#c8c8c8" stroke-width=".9"/><rect x="3.6" y="10.4" width="7.6" height="5.2" fill="#e6e6e6"/><rect x="5" y="11.4" width="2.4" height="3.8" fill="#222"/></svg>
<div class="a " style="left:624.4px;top:901.4px;width:112.6px;height:22.2px;background:#e1e1e1;border:1px solid #b4b4b4;box-sizing:border-box;"></div>
<span class="t" style="left:662.70px;top:907.00px;font-size:13px;letter-spacing:0.634px;color:#1c1c1c;">Apply</span>
<div class="a " style="left:761px;top:901.4px;width:113px;height:22.2px;background:#e1e1e1;border:1px solid #b4b4b4;box-sizing:border-box;"></div>
<span class="t" style="left:808.30px;top:907.00px;font-size:13px;letter-spacing:0.838px;color:#1c1c1c;">Ok</span>
<div class="a " style="left:898px;top:901.4px;width:113px;height:22.2px;background:#e1e1e1;border:1px solid #b4b4b4;box-sizing:border-box;"></div>
<span class="t" style="left:933.30px;top:907.00px;font-size:13px;letter-spacing:0.105px;color:#1c1c1c;">Cancel</span>
<svg class="a" style="left:0;top:0" width="1024" height="930" viewBox="0 0 1024 930"><path d="M295 149.6C405 149.6 503 190.6 613 190.6H615" fill="none" stroke="#c0c0b4" stroke-width="1.7"/><path d="M618 190.6L611.4 185L613.6 190.6L611.4 196.2Z" fill="#c0c0b4"/><path d="M295 170.1C405 170.1 503 211.1 613 211.1H615" fill="none" stroke="#c0c0b4" stroke-width="1.7"/><path d="M618 211.1L611.4 205.5L613.6 211.1L611.4 216.7Z" fill="#c0c0b4"/><path d="M295 190.6C405 190.6 503 231.6 613 231.6H615" fill="none" stroke="#c0c0b4" stroke-width="1.7"/><path d="M618 231.6L611.4 226L613.6 231.6L611.4 237.2Z" fill="#c0c0b4"/><path d="M295 211.1C405 211.1 503 252.1 613 252.1H615" fill="none" stroke="#c0c0b4" stroke-width="1.7"/><path d="M618 252.1L611.4 246.5L613.6 252.1L611.4 257.7Z" fill="#c0c0b4"/><path d="M295 231.6C405 231.6 503 272.6 613 272.6H615" fill="none" stroke="#c0c0b4" stroke-width="1.7"/><path d="M618 272.6L611.4 267L613.6 272.6L611.4 278.2Z" fill="#c0c0b4"/><path d="M295 252.1C405 252.1 503 293.1 613 293.1H615" fill="none" stroke="#c0c0b4" stroke-width="1.7"/><path d="M618 293.1L611.4 287.5L613.6 293.1L611.4 298.7Z" fill="#c0c0b4"/><path d="M295 272.6C405 272.6 503 313.6 613 313.6H615" fill="none" stroke="#c0c0b4" stroke-width="1.7"/><path d="M618 313.6L611.4 308L613.6 313.6L611.4 319.2Z" fill="#c0c0b4"/><path d="M295 293.1C405 293.1 503 334.1 613 334.1H615" fill="none" stroke="#c0c0b4" stroke-width="1.7"/><path d="M618 334.1L611.4 328.5L613.6 334.1L611.4 339.7Z" fill="#c0c0b4"/><path d="M295 231.6C412 231.6 492 134.6 613 134.6H615" fill="none" stroke="#fdc02a" stroke-width="2"/><path d="M295 252.1C412 252.1 492 134.6 613 134.6H615" fill="none" stroke="#fdc02a" stroke-width="2"/><path d="M618 134.6L611.4 129L613.6 134.6L611.4 140.2Z" fill="#fdc02a"/><path d="M294.6 146.4L298.6 149.6L294.6 152.8Z" fill="#ffff00"/><path d="M295 149.6C424.8 149.6 488.5 430.8 613 430.8H615" fill="none" stroke="#ffff00" stroke-width="2.5"/><path d="M618 430.8L612 424.4L612 437.2Z" fill="#ffff00"/><path d="M294.6 166.9L298.6 170.1L294.6 173.3Z" fill="#ffff00"/><path d="M295 170.1C424.8 170.1 488.5 451.3 613 451.3H615" fill="none" stroke="#ffff00" stroke-width="2.5"/><path d="M618 451.3L612 444.9L612 457.7Z" fill="#ffff00"/><path d="M294.6 187.4L298.6 190.6L294.6 193.8Z" fill="#ffff00"/><path d="M295 190.6C424.8 190.6 488.5 471.8 613 471.8H615" fill="none" stroke="#ffff00" stroke-width="2.5"/><path d="M618 471.8L612 465.4L612 478.2Z" fill="#ffff00"/><path d="M294.6 207.9L298.6 211.1L294.6 214.3Z" fill="#ffff00"/><path d="M295 211.1C424.8 211.1 488.5 492.3 613 492.3H615" fill="none" stroke="#ffff00" stroke-width="2.5"/><path d="M618 492.3L612 485.9L612 498.7Z" fill="#ffff00"/><path d="M294.6 228.4L298.6 231.6L294.6 234.8Z" fill="#ffff00"/><path d="M295 231.6C424.8 231.6 488.5 512.8 613 512.8H615" fill="none" stroke="#ffff00" stroke-width="2.5"/><path d="M618 512.8L612 506.4L612 519.2Z" fill="#ffff00"/><path d="M294.6 248.9L298.6 252.1L294.6 255.3Z" fill="#ffff00"/><path d="M295 252.1C424.8 252.1 488.5 533.3 613 533.3H615" fill="none" stroke="#ffff00" stroke-width="2.5"/><path d="M618 533.3L612 526.9L612 539.7Z" fill="#ffff00"/><path d="M294.6 269.4L298.6 272.6L294.6 275.8Z" fill="#ffff00"/><path d="M295 272.6C424.8 272.6 488.5 553.8 613 553.8H615" fill="none" stroke="#ffff00" stroke-width="2.5"/><path d="M618 553.8L612 547.4L612 560.2Z" fill="#ffff00"/><path d="M294.6 289.9L298.6 293.1L294.6 296.3Z" fill="#ffff00"/><path d="M295 293.1C424.8 293.1 488.5 574.3 613 574.3H615" fill="none" stroke="#ffff00" stroke-width="2.5"/><path d="M618 574.3L612 567.9L612 580.7Z" fill="#ffff00"/></svg>
<span class="t" style="left:257.90px;top:461.33px;font-size:17.8px;letter-spacing:0.000px;color:#7d1a12;font-weight:700;-webkit-text-stroke:.35px #7d1a12;transform:scaleX(1.1746);transform-origin:0 0;">tutorialgateway.org</span>
<div class="a " style="left:0px;top:0px;width:1024px;height:1px;background:#16161f;"></div>
<div class="a " style="left:0px;top:1px;width:1px;height:929px;background:#9b9b9b;"></div>
<div class="a " style="left:1023px;top:0px;width:1px;height:930px;background:#101018;"></div>
<div class="a " style="left:0px;top:929px;width:1024px;height:1px;background:#8a8a8a;"></div>
</body></html>
